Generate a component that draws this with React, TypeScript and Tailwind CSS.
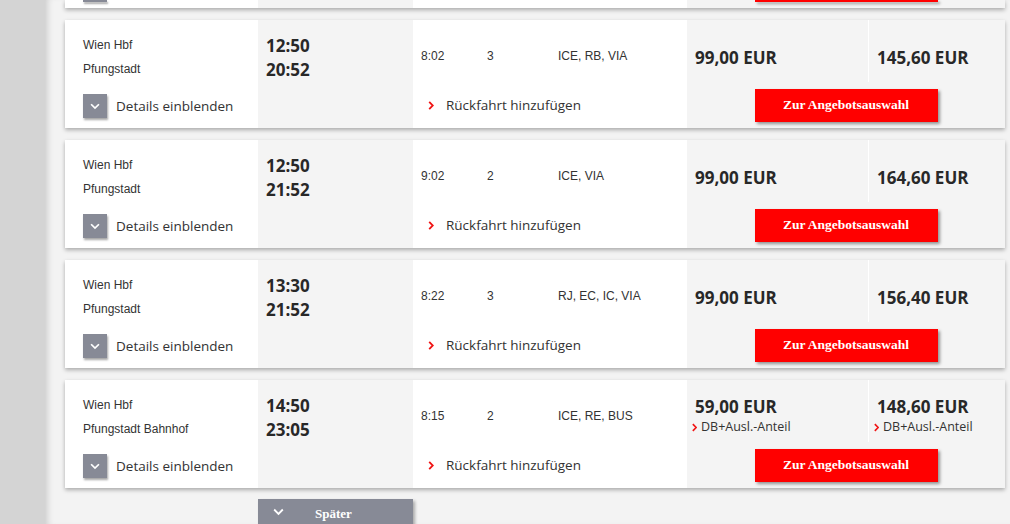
import React from "react";

type Conn = {
  from: string;
  to: string;
  dep: string;
  arr: string;
  dur: string;
  changes: string;
  products: string;
  p1: string;
  p2: string;
  anteil?: boolean;
};

const conns: Conn[] = [
  { from: "Wien Hbf", to: "Pfungstadt", dep: "12:50", arr: "20:52", dur: "8:02", changes: "3", products: "ICE, RB, VIA", p1: "99,00 EUR", p2: "145,60 EUR" },
  { from: "Wien Hbf", to: "Pfungstadt", dep: "12:50", arr: "21:52", dur: "9:02", changes: "2", products: "ICE, VIA", p1: "99,00 EUR", p2: "164,60 EUR" },
  { from: "Wien Hbf", to: "Pfungstadt", dep: "13:30", arr: "21:52", dur: "8:22", changes: "3", products: "RJ, EC, IC, VIA", p1: "99,00 EUR", p2: "156,40 EUR" },
  { from: "Wien Hbf", to: "Pfungstadt Bahnhof", dep: "14:50", arr: "23:05", dur: "8:15", changes: "2", products: "ICE, RE, BUS", p1: "59,00 EUR", p2: "148,60 EUR", anteil: true },
];

const Chevron = ({ className = "" }: { className?: string }) => (
  <svg viewBox="0 0 12 8" className={className} fill="none" stroke="currentColor" strokeWidth="2" strokeLinecap="square">
    <path d="M2 2 L6 6 L10 2" />
  </svg>
);

const RedArrow = ({ className = "" }: { className?: string }) => (
  <svg viewBox="0 0 6 10" className={className} fill="none" stroke="#f01414" strokeWidth="2">
    <path d="M1 1 L5 5 L1 9" />
  </svg>
);

const sans = "font-['Open_Sans',sans-serif]";
const arial = "font-['Liberation_Sans',Arial,sans-serif]";
const serif = "font-['Liberation_Serif',serif]";

function Price({ value, anteil }: { value: string; anteil?: boolean }) {
  return (
    <div className={anteil ? "pt-[16px]" : "pt-[27px]"}>
      <div className={`${sans} font-bold text-[17px] leading-[22px] text-[#282828]`}>{value}</div>
      {anteil && (
        <div className="flex items-center">
          <RedArrow className="w-[5px] h-[9px] ml-[-3px]" />
          <span className={`${sans} text-[12.5px] text-[#333] ml-[4px] leading-[18px]`}>DB+Ausl.-Anteil</span>
        </div>
      )}
    </div>
  );
}

function Card({ c }: { c: Conn }) {
  return (
    <div className="flex h-[108px] shadow-[0_2px_4px_rgba(0,0,0,0.3)] shrink-0">
      <div className="w-[193px] bg-white pl-[18px] flex flex-col">
        <div className={`${arial} text-[12px] text-[#333] pt-[17px] leading-[16px]`}>{c.from}</div>
        <div className={`${arial} text-[12px] text-[#333] mt-[8px] leading-[16px]`}>{c.to}</div>
        <div className="flex items-center mt-[17px]">
          <div className="w-[24px] h-[24px] bg-[#878a96] flex items-center justify-center text-white shadow-[1px_2px_2px_rgba(0,0,0,0.35)]">
            <Chevron className="w-[10px] h-[7px]" />
          </div>
          <span className={`${sans} text-[13.5px] text-[#333] ml-[9px]`}>Details einblenden</span>
        </div>
      </div>
      <div className="w-[155px] bg-[#f4f4f4] pl-[8px] pt-[14px]">
        <div className={`${sans} font-bold text-[17px] leading-[24px] text-[#282828]`}>{c.dep}</div>
        <div className={`${sans} font-bold text-[17px] leading-[24px] text-[#282828]`}>{c.arr}</div>
      </div>
      <div className="w-[274px] bg-white flex flex-col">
        <div className={`${arial} text-[12px] text-[#333] flex h-[62px] items-center pt-[10px]`}>
          <span className="w-[74px] pl-[8px]">{c.dur}</span>
          <span className="w-[71px]">{c.changes}</span>
          <span>{c.products}</span>
        </div>
        <div className="flex items-center pl-[15px] h-[22px] mt-[12px]">
          <RedArrow className="w-[6px] h-[9px]" />
          <span className={`${sans} text-[13.5px] text-[#333] ml-[12px]`}>Rückfahrt hinzufügen</span>
        </div>
      </div>
      <div className="flex-1 bg-[#f4f4f4] flex flex-col">
        <div className="flex h-[62px]">
          <div className="w-[182px] pl-[8px] border-r border-white">
            <Price value={c.p1} anteil={c.anteil} />
          </div>
          <div className="flex-1 pl-[8px]">
            <Price value={c.p2} anteil={c.anteil} />
          </div>
        </div>
        <div className="flex justify-center mt-[7px]">
          <div className={`${serif} font-bold text-[13.5px] text-white bg-[#ff0000] w-[183px] h-[33px] flex items-center justify-center shadow-[2px_2px_3px_rgba(0,0,0,0.4)]`}>
            Zur Angebotsauswahl
          </div>
        </div>
      </div>
    </div>
  );
}

function Stub() {
  return (
    <div className="flex h-[8px] shrink-0 shadow-[0_2px_4px_rgba(0,0,0,0.3)]">
      <div className="w-[193px] bg-white pl-[18px]">
        <div className="w-[24px] h-[2px] bg-[#878a96] shadow-[1px_2px_2px_rgba(0,0,0,0.35)]" />
      </div>
      <div className="w-[155px] bg-[#f4f4f4]" />
      <div className="w-[274px] bg-white" />
      <div className="flex-1 bg-[#f4f4f4] flex justify-center">
        <div className="w-[183px] h-[2px] bg-[#ff0000] shadow-[2px_2px_3px_rgba(0,0,0,0.4)]" />
      </div>
    </div>
  );
}

export default function App() {
  return (
    <div className="flex w-[1010px] h-[524px] overflow-hidden bg-[#f3f3f3]">
      <div className="w-[45px] shrink-0 bg-[#d4d4d4]" />
      <div className="flex-1 h-full bg-[#f3f3f3] shadow-[inset_7px_0_7px_-5px_rgba(0,0,0,0.18)] pl-[20px] pr-[5px] flex flex-col gap-[12px] overflow-hidden">
        <Stub />
        {conns.map((c, i) => (
          <Card key={i} c={c} />
        ))}
        <div className="pl-[193px] mt-[-1px]">
          <div className="w-[155px] h-[30px] bg-[#878a96] flex items-start pt-[5px] text-white shadow-[2px_2px_3px_rgba(0,0,0,0.3)]">
            <Chevron className="w-[11px] h-[8px] ml-[15px] mt-[4px]" />
            <span className={`${serif} font-bold text-[13px] ml-[31px]`}>Später</span>
          </div>
        </div>
      </div>
    </div>
  );
}
